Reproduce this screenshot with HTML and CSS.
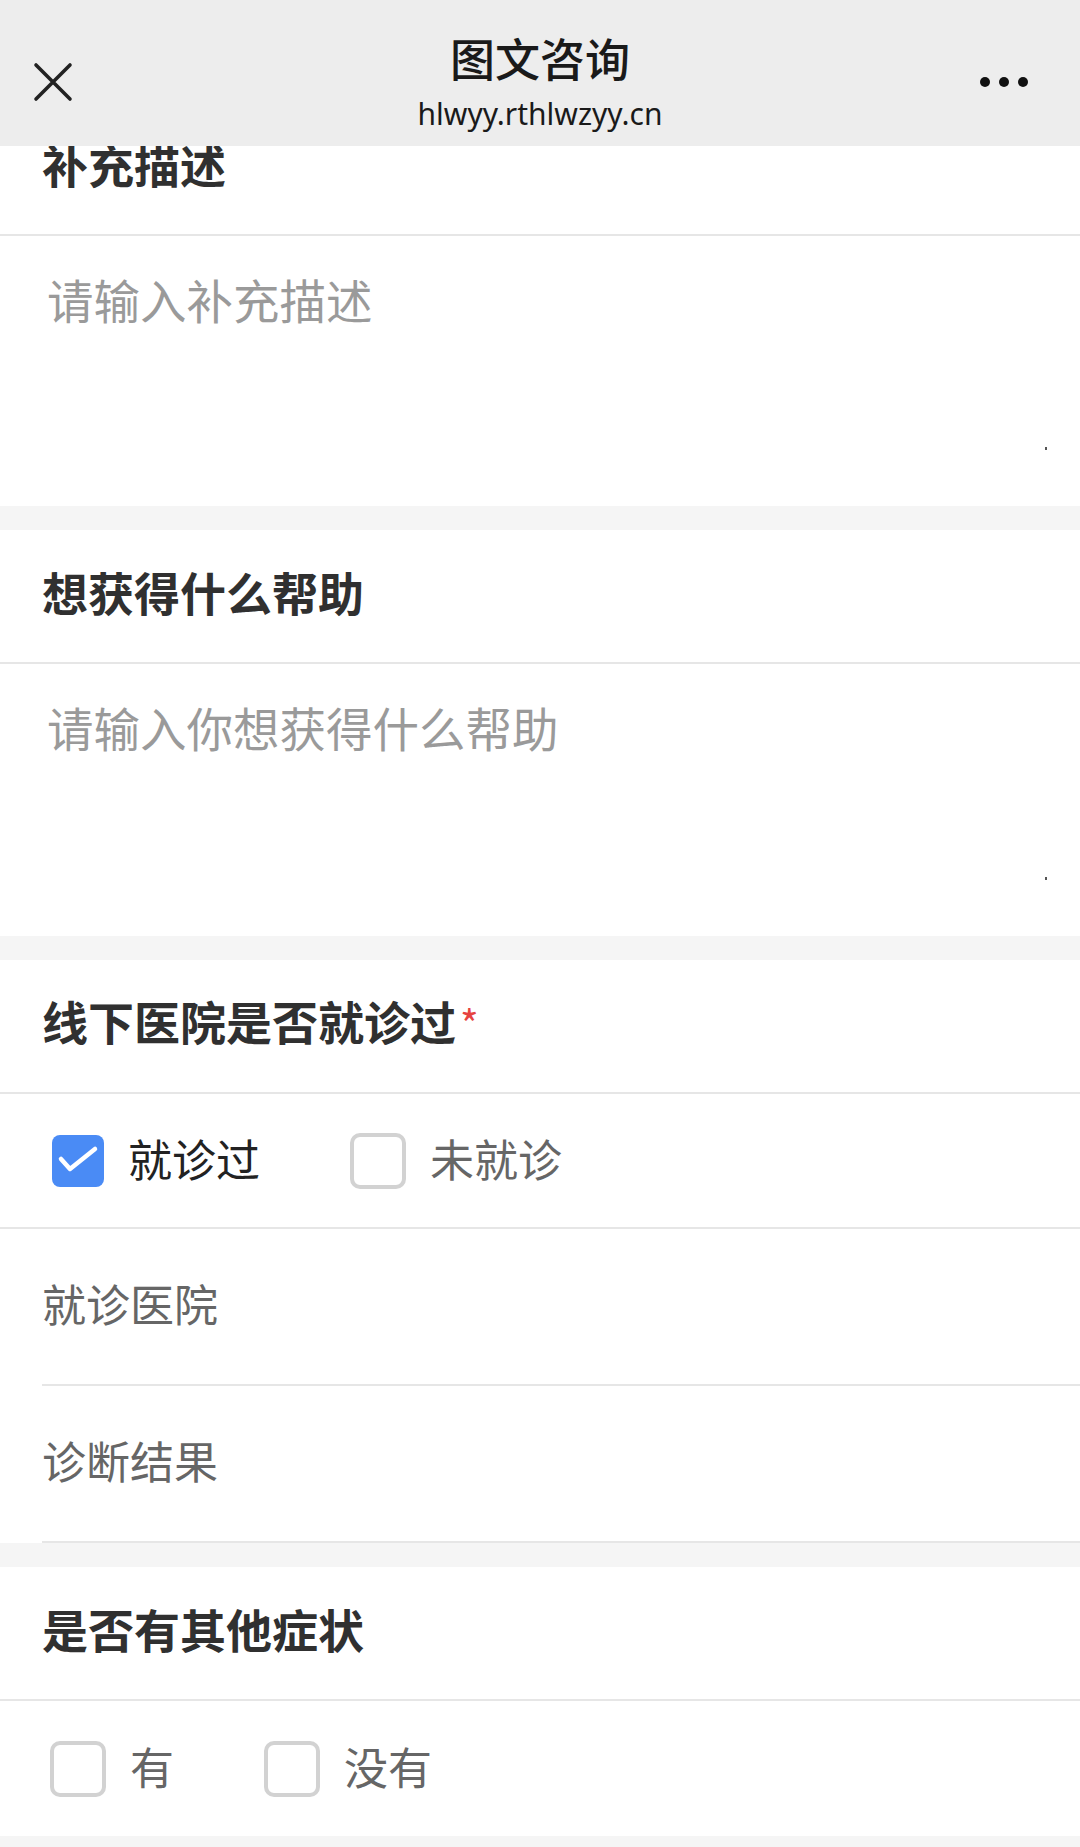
FILE: index.html
```html
<!DOCTYPE html>
<html lang="zh-CN">
<head>
<meta charset="utf-8">
<title>图文咨询</title>
<link rel="stylesheet" href="styles.css">
</head>
<body>
<header class="nav">
  <div class="nav-left">
    <svg class="icon-close" width="40" height="40" viewBox="0 0 40 40" aria-hidden="true">
      <path d="M3 3 L37 37 M37 3 L3 37" stroke="#222" stroke-width="3.6" stroke-linecap="round" fill="none"/>
    </svg>
  </div>
  <div class="nav-title">
    <div class="title">图文咨询</div>
    <div class="url">hlwyy.rthlwzyy.cn</div>
  </div>
  <div class="nav-right">
    <span class="dot"></span><span class="dot"></span><span class="dot"></span>
  </div>
</header>

<main class="viewport">
  <div class="scroller">
    <section class="card">
      <div class="card-head"><span class="label">补充描述</span></div>
      <div class="ta-wrap ta-wrap-1"><textarea class="ta" placeholder="请输入补充描述"></textarea></div>
    </section>

    <section class="card">
      <div class="card-head"><span class="label">想获得什么帮助</span></div>
      <div class="ta-wrap ta-wrap-2"><textarea class="ta" placeholder="请输入你想获得什么帮助"></textarea></div>
    </section>

    <section class="card">
      <div class="card-head"><span class="label">线下医院是否就诊过<span class="req">*</span></span></div>
      <div class="check-row">
        <label class="opt on">
          <span class="box">
            <svg width="52" height="52" viewBox="0 0 52 52" aria-hidden="true">
              <path d="M9 24 L18 34 L43 14" stroke="#fff" stroke-width="4.5" stroke-linecap="round" stroke-linejoin="round" fill="none"/>
            </svg>
          </span>
          <span class="opt-text">就诊过</span>
        </label>
        <label class="opt">
          <span class="box"></span>
          <span class="opt-text">未就诊</span>
        </label>
      </div>
      <div class="field">就诊医院</div>
      <div class="field">诊断结果</div>
    </section>

    <section class="card">
      <div class="card-head"><span class="label">是否有其他症状</span></div>
      <div class="check-row check-row-last">
        <label class="opt">
          <span class="box"></span>
          <span class="opt-text">有</span>
        </label>
        <label class="opt">
          <span class="box"></span>
          <span class="opt-text">没有</span>
        </label>
      </div>
    </section>
  </div>
</main>
</body>
</html>
```

FILE: styles.css
```css
html, body {
  margin: 0;
  padding: 0;
}

body {
  width: 1080px;
  background: #f5f5f5;
  font-family: "Noto Sans CJK SC", "Noto Sans", sans-serif;
  color: #333;
}

/* ---------- nav bar ---------- */
.nav {
  display: grid;
  grid-template-columns: 1fr auto 1fr;
  align-items: center;
  height: 146px;
  padding-top: 17px;
  box-sizing: border-box;
  background: #ededed;
}

.nav-left {
  display: flex;
  padding-left: 33px;
}

.nav-title {
  text-align: center;
  margin-bottom: -2px;
}

.title {
  font-size: 45px;
  line-height: 52px;
  font-weight: 500;
  color: #1a1a1a;
}

.url {
  margin-top: 10px;
  font-family: "Noto Sans", sans-serif;
  font-size: 30px;
  line-height: 40px;
  color: #1a1a1a;
}

.nav-right {
  display: flex;
  justify-content: flex-end;
  gap: 9px;
  padding-right: 52px;
}

.dot {
  width: 10px;
  height: 10px;
  border-radius: 50%;
  background: #111;
}

/* ---------- scrolled content ---------- */
.viewport {
  display: block;
  height: 1701px;
  overflow: hidden;
}

.scroller {
  margin-top: -44px;
}

.card {
  background: #fff;
  margin-bottom: 24px;
}

.card-head {
  display: flex;
  align-items: center;
  height: 134px;
  box-sizing: border-box;
  padding: 0 42px 10px;
  border-bottom: 2px solid #e6e6e6;
}

.label {
  font-size: 46px;
  line-height: 56px;
  font-weight: 700;
  color: #303030;
}

.req {
  margin-left: 4px;
  font-size: 40px;
  font-weight: 400;
  color: #e64340;
}

/* ---------- textareas ---------- */
.ta-wrap {
  position: relative;
}

.ta-wrap-1 {
  height: 270px;
}

.ta-wrap-2 {
  height: 272px;
}

.ta-wrap::after {
  content: "";
  position: absolute;
  right: 33px;
  bottom: 56px;
  width: 2px;
  height: 3px;
  background: #555;
}

.ta {
  display: block;
  width: 100%;
  height: 100%;
  box-sizing: border-box;
  margin: 0;
  padding: 31px 47px;
  border: 0;
  outline: 0;
  resize: none;
  background: transparent;
  font-family: "Noto Sans CJK SC", "Noto Sans", sans-serif;
  font-size: 46.5px;
  line-height: 64px;
  color: #333;
}

.ta::placeholder {
  color: #9a9a9a;
}

/* ---------- checkbox rows ---------- */
.check-row {
  display: flex;
  align-items: center;
  gap: 90px;
  height: 135px;
  box-sizing: border-box;
  padding-left: 52px;
  border-bottom: 2px solid #e6e6e6;
}

.check-row-last {
  border-bottom: 0;
  padding-left: 50px;
}

.opt {
  display: flex;
  align-items: center;
  gap: 24px;
  font-size: 44px;
  line-height: 1;
  color: #666;
}

.opt-text {
  padding-bottom: 6px;
}

.opt.on {
  color: #222;
}

.box {
  display: block;
  width: 56px;
  height: 56px;
  box-sizing: border-box;
  border: 4px solid #d2d2d2;
  border-radius: 10px;
  background: #fff;
}

.opt.on .box {
  display: flex;
  width: 52px;
  height: 52px;
  border: 0;
  border-radius: 8px;
  background: #4a8bf5;
}

/* ---------- text fields ---------- */
.field {
  display: flex;
  align-items: center;
  height: 157px;
  box-sizing: border-box;
  margin-left: 42px;
  padding-bottom: 8px;
  border-bottom: 2px solid #e6e6e6;
  font-size: 44px;
  color: #666;
}
```
